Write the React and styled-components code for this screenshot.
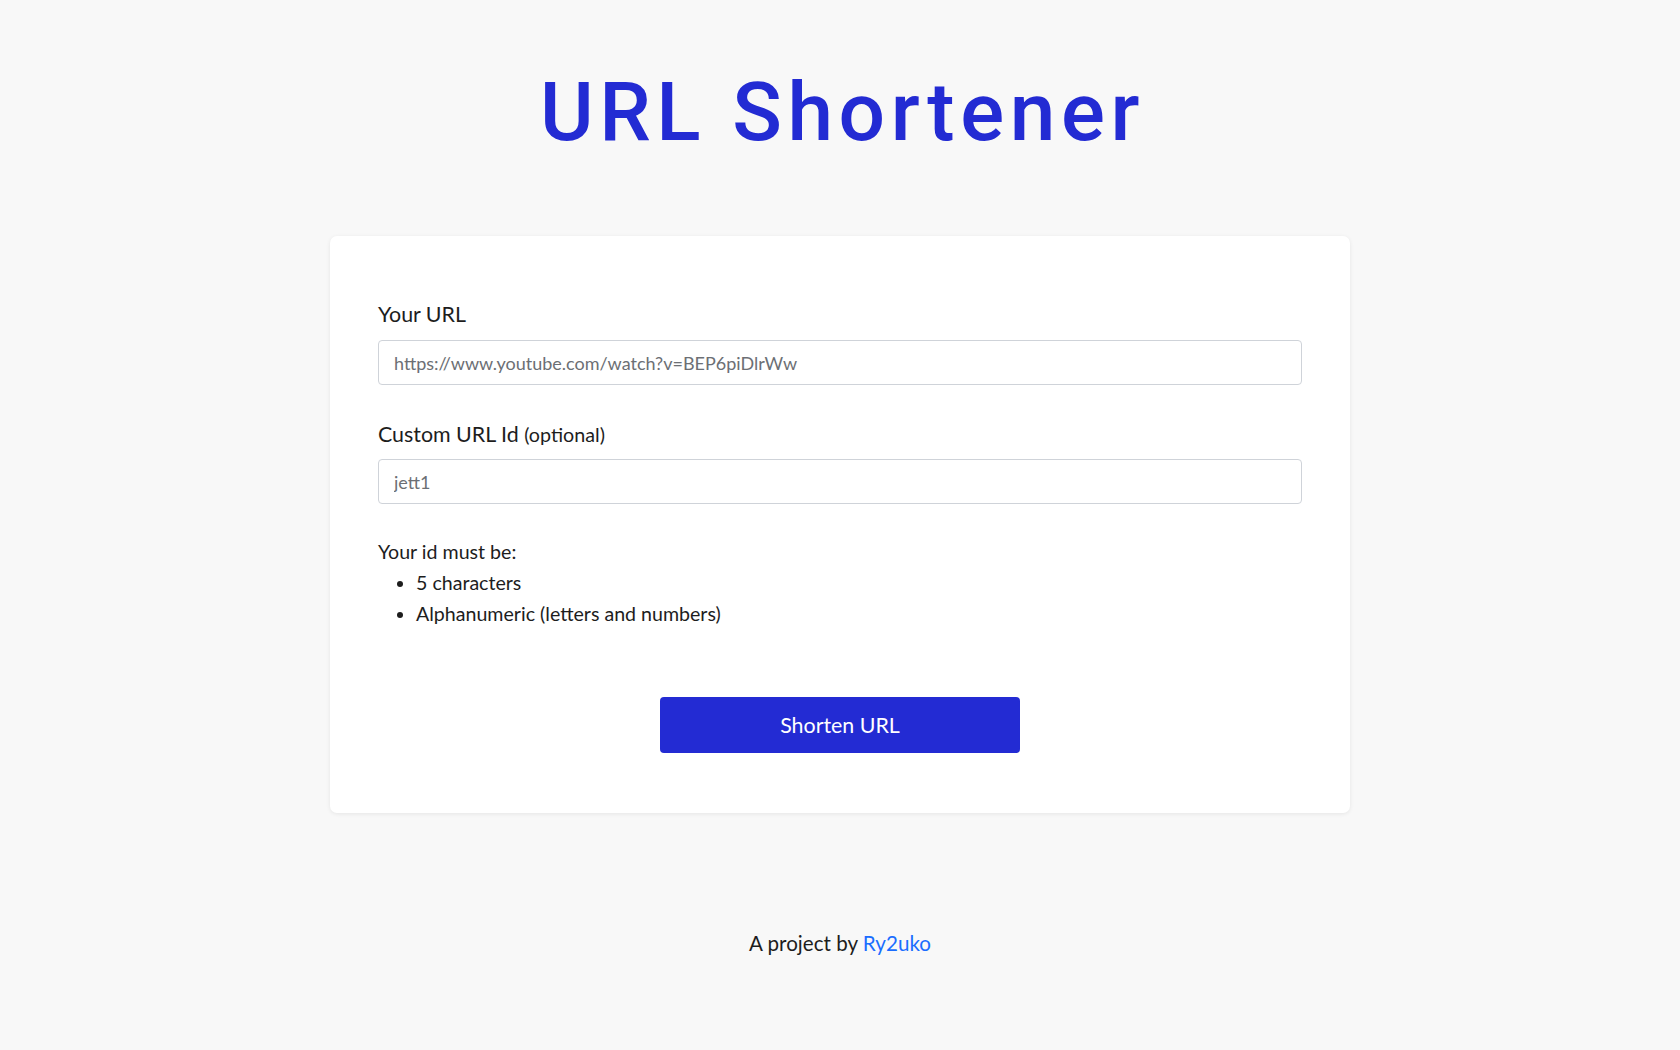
import React from "react";
import styled, { createGlobalStyle } from "styled-components";

const Global = createGlobalStyle`
  html, body { margin: 0; padding: 0; background: #f8f8f8; }
  body { font-family: "Lato", "Open Sans", sans-serif; color: #1f1f1f; }
  #root { min-height: 1050px; }
`;

const Page = styled.main`
  display: flex;
  flex-direction: column;
  align-items: center;
  padding-top: 63px;
`;

const Title = styled.h1`
  margin: 0 0 0 5px;
  font-family: "Roboto", "Liberation Sans", sans-serif;
  font-weight: 500;
  font-size: 82px;
  line-height: 98px;
  letter-spacing: 5.6px;
  color: #232bd3;
`;

const Card = styled.section`
  box-sizing: border-box;
  width: 1020px;
  margin-top: 75px;
  padding: 64px 48px 60px;
  background: #ffffff;
  border-radius: 7px;
  box-shadow: 0 1px 4px rgba(0, 0, 0, 0.08);
`;

const Field = styled.div`
  display: flex;
  flex-direction: column;
  margin-bottom: ${(p) => p.$mb || 0}px;
`;

const Label = styled.label`
  font-size: 21.4px;
  line-height: 28px;
  margin-bottom: ${(p) => p.$mb ?? 12}px;
  color: #1d1d1d;
`;

const Small = styled.span`
  font-size: 19.7px;
`;

const Input = styled.input`
  box-sizing: border-box;
  width: 100%;
  height: 45px;
  padding: 0 15px;
  border: 1px solid #cfd3d9;
  border-radius: 4px;
  font-family: "Lato", sans-serif;
  font-size: 18px;
  color: #333;
  background: #fff;
  outline: none;
  &::placeholder { color: #6c6f74; }
`;

const Rules = styled.div`
  font-size: 19.6px;
  line-height: 31px;
  color: #1d1d1d;
`;

const RuleList = styled.ul`
  margin: 0;
  padding-left: 38px;
`;

const ButtonRow = styled.div`
  display: flex;
  justify-content: center;
  margin-top: 68px;
`;

const Button = styled.button`
  width: 360px;
  height: 56px;
  border: none;
  border-radius: 4px;
  background: #232bd3;
  color: #fff;
  font-family: "Lato", sans-serif;
  font-size: 21.4px;
  cursor: pointer;
`;

const Footer = styled.footer`
  margin-top: 118px;
  font-size: 20.6px;
  color: #1d1d1d;
`;

const Link = styled.a`
  color: #1a6dff;
  text-decoration: none;
`;

export default function App() {
  return (
    <>
      <Global />
      <Page>
        <Title>URL Shortener</Title>
        <Card>
          <Field $mb={35}>
            <Label htmlFor="url">Your URL</Label>
            <Input id="url" placeholder="https://www.youtube.com/watch?v=BEP6piDlrWw" />
          </Field>
          <Field $mb={32}>
            <Label htmlFor="cid" $mb={10}>
              Custom URL Id <Small>(optional)</Small>
            </Label>
            <Input id="cid" placeholder="jett1" />
          </Field>
          <Rules>
            Your id must be:
            <RuleList>
              <li>5 characters</li>
              <li>Alphanumeric (letters and numbers)</li>
            </RuleList>
          </Rules>
          <ButtonRow>
            <Button type="button">Shorten URL</Button>
          </ButtonRow>
        </Card>
        <Footer>
          A project by <Link href="#">Ry2uko</Link>
        </Footer>
      </Page>
    </>
  );
}
